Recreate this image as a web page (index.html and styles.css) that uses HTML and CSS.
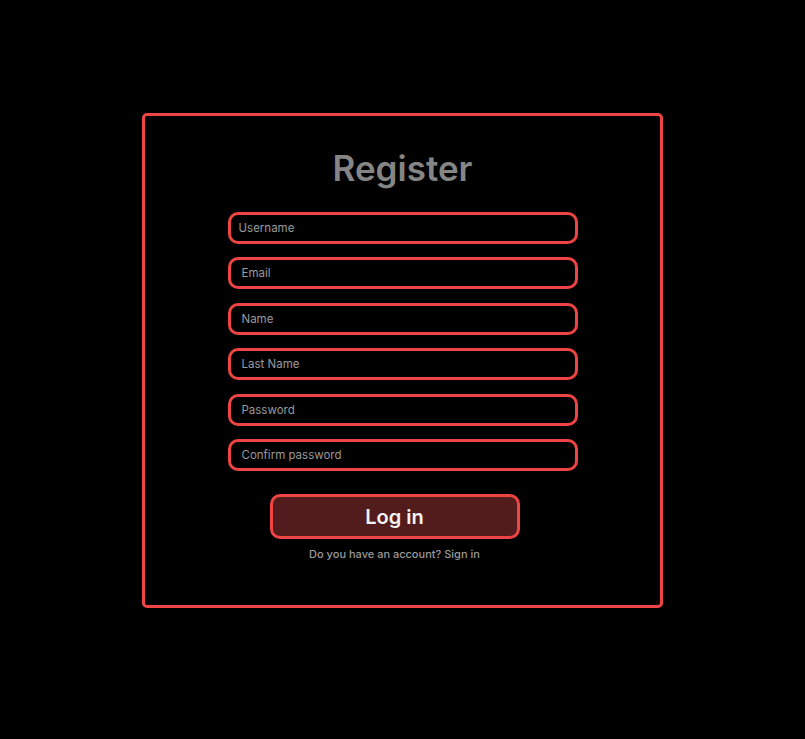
FILE: index.html
```html
<!DOCTYPE html>
<html>
<head>
<meta charset="utf-8">
<link rel="stylesheet" href="styles.css">
</head>
<body>
<div class="page">
  <form class="card">
    <h1 class="title">Register</h1>
    <div class="fields">
      <input class="field field-first" type="text" placeholder="Username">
      <input class="field" type="email" placeholder="Email">
      <input class="field" type="text" placeholder="Name">
      <input class="field" type="text" placeholder="Last Name">
      <input class="field" type="password" placeholder="Password">
      <input class="field" type="password" placeholder="Confirm password">
    </div>
    <div class="actions">
      <button class="btn" type="button">Log in</button>
      <p class="note">Do you have an account? Sign in</p>
    </div>
  </form>
</div>
</body>
</html>
```

FILE: styles.css
```css
html, body {
  margin: 0;
  padding: 0;
  background: #000;
  height: 100%;
}
body {
  font-family: Inter, "Noto Sans", sans-serif;
}
.page {
  display: flex;
  justify-content: center;
  padding-top: 113px;
}
.card {
  box-sizing: border-box;
  width: 521px;
  height: 495px;
  border: 3px solid #ef4444;
  border-radius: 5px;
  display: flex;
  flex-direction: column;
  align-items: center;
  padding-top: 31px;
  margin: 0;
}
.title {
  margin: 0;
  font-size: 35px;
  line-height: 42px;
  font-weight: 600;
  color: #858585;
}
.fields {
  margin-top: 23px;
  display: flex;
  flex-direction: column;
  gap: 13.4px;
}
.field {
  box-sizing: border-box;
  width: 350px;
  height: 32px;
  border: 3px solid #ef4444;
  border-radius: 10px;
  background: #000;
  padding: 0 11px;
  font-family: Inter, sans-serif;
  font-size: 11.5px;
  color: #9a9a9a;
  outline: none;
}
.field-first {
  padding-left: 8px;
}
.field::placeholder {
  color: #9a9a9a;
}
.actions {
  display: flex;
  flex-direction: column;
  align-items: center;
  margin-top: 23px;
  margin-right: 16px;
}
.btn {
  box-sizing: border-box;
  width: 250px;
  height: 45px;
  padding-top: 2px;
  border: 3px solid #ef4444;
  border-radius: 10px;
  background: #521c1c;
  color: #f3f3f3;
  font-family: Inter, sans-serif;
  font-size: 20px;
  font-weight: 600;
}
.note {
  margin: 8px 0 0;
  font-size: 11px;
  line-height: 14px;
  color: #9a9a9a;
  font-weight: 500;
}
```
